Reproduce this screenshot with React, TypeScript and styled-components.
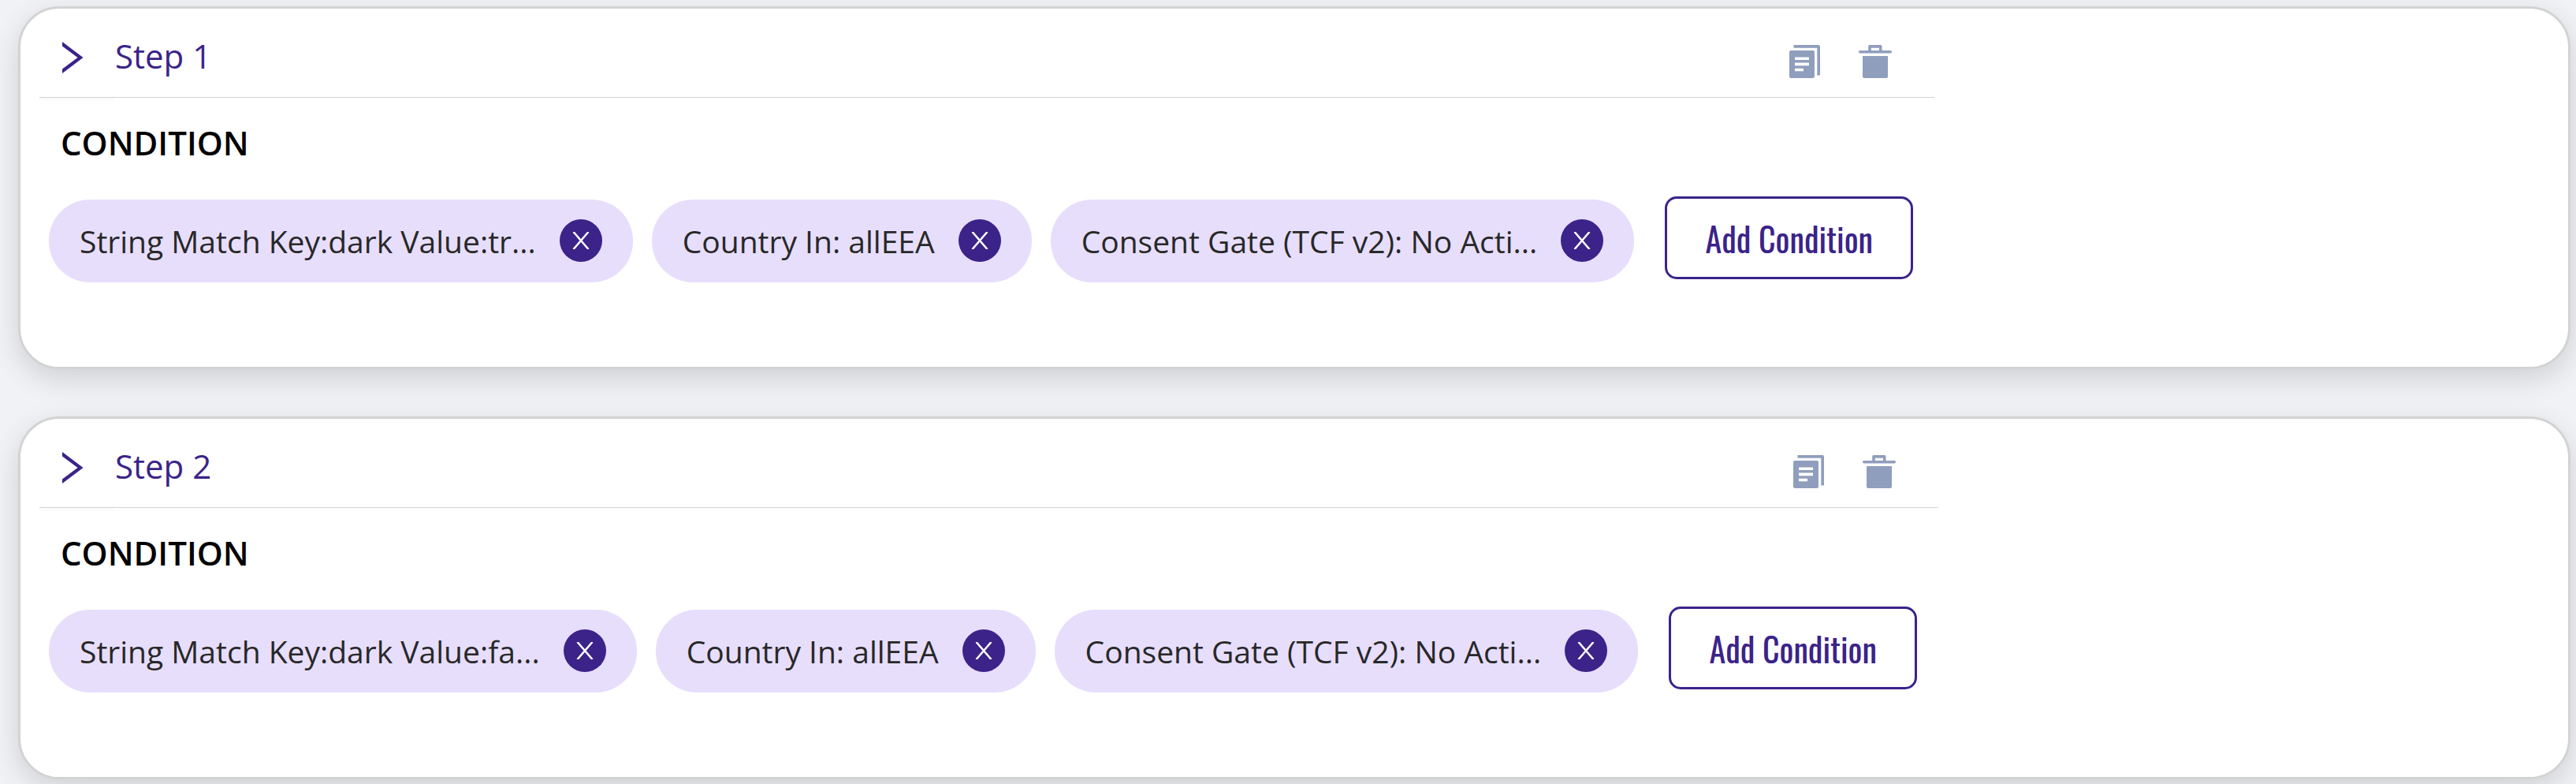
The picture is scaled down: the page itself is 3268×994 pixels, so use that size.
import React, { useState } from "react";
import styled, { createGlobalStyle } from "styled-components";

const GlobalStyle = createGlobalStyle`
  *, *::before, *::after { box-sizing: border-box; }
  body {
    margin: 0;
    background: #f1f2f6;
    font-family: "Open Sans", "Noto Sans", sans-serif;
  }
  button {
    margin: 0;
    padding: 0;
    border: 0;
    background: none;
    font: inherit;
    color: inherit;
    cursor: pointer;
  }
`;

const StepList = styled.main`
  display: flex;
  flex-direction: column;
  gap: 60px;
  padding: 8px 7px 6px 23px;
  overflow: hidden;
`;

const Card = styled.section`
  min-height: 460px;
  padding: 15px 24px;
  border: 3px solid #d3d3d3;
  border-radius: 52px;
  background: #ffffff;
  box-shadow: 0 12px 36px rgba(0, 0, 0, 0.14);
`;

const CardContent = styled.div`
  width: fit-content;
  isolation: isolate;
`;

const CardHeader = styled.header`
  display: flex;
  align-items: center;
  height: 98px;
  padding-right: 54px;
  border-bottom: 1px solid #d3d3d3;
`;

const Toggle = styled.button`
  position: relative;
  display: flex;
  align-items: center;
  width: 96px;
  height: 97px;
  padding: 0 0 3px 29px;

  /* faint lip under the toggle, kept behind the header rule */
  &::before {
    content: "";
    position: absolute;
    inset: 0;
    z-index: -1;
    border-radius: 6px;
    box-shadow: 0 5px 0 #fbfbfb;
  }
`;

const StepTitle = styled.h2`
  flex: 1;
  margin: 0 0 8px;
  color: #3b2389;
  font-size: 42px;
  line-height: 58px;
  font-weight: 400;
`;

const HeaderActions = styled.div`
  display: flex;
  gap: 48px;
  margin-top: 6px;
  color: #909ebd;

  button, svg { display: block; }
`;

const SectionTitle = styled.h3`
  margin: 28px 0 39px;
  padding-left: 27px;
  color: #000000;
  font-size: 42px;
  line-height: 58px;
  font-weight: 600;
`;

const ConditionRow = styled.div`
  display: flex;
  gap: 39px;
  padding: 0 27px 0 12px;
`;

const ChipList = styled.ul`
  display: flex;
  gap: 24px;
  margin: 4px 0 0;
  padding: 0;
  list-style: none;
`;

const Chip = styled.li`
  display: flex;
  align-items: center;
  gap: 30px;
  height: 105px;
  padding: 0 39px;
  border-radius: 52px;
  background: #e7defc;
  color: #282828;
  font-size: 39px;
  line-height: 54px;
  white-space: nowrap;
`;

const RemoveButton = styled.button`
  display: flex;
  align-items: center;
  justify-content: center;
  width: 54px;
  height: 54px;
  margin-bottom: 2px;
  border-radius: 50%;
  background: #3b2389;
  color: #ffffff;
`;

const AddButton = styled.button`
  min-width: 315px;
  height: 105px;
  border: 3px solid #3b2389;
  border-radius: 15px;
  color: #3b2389;
  font-family: "Oswald", "Liberation Sans Narrow", "Liberation Sans", sans-serif;
  font-size: 42px;
  line-height: 58px;
  font-weight: 400;
  white-space: nowrap;
`;

const ChevronIcon = () => (
  <svg width="27" height="42" viewBox="0 0 27 42" fill="currentColor" color="#3b2389" aria-hidden="true">
    <path d="M0 1 26.500 21 0 41V35.500L19.500 21 0 6.500Z" />
  </svg>
);

const CopyIcon = () => (
  <svg width="40" height="42" viewBox="0 0 40 42" fill="currentColor" aria-hidden="true">
    <path d="M5.500 0H37Q39 0 39 2V38.500H35.300V3.700H5.500Z" />
    <path
      fillRule="evenodd"
      d="M2 7H30Q32 7 32 9V40Q32 42 30 42H2Q0 42 0 40V9Q0 7 2 7ZM7 15.500V19H25V15.500ZM7 22.500V26.200H25V22.500ZM7 29.700V33.300H18V29.700Z"
    />
  </svg>
);

const TrashIcon = () => (
  <svg width="42" height="42" viewBox="0 0 42 42" fill="currentColor" aria-hidden="true">
    <path
      fillRule="evenodd"
      d="M14 0H28Q29.500 0 29.500 1.500V7H40.500Q42 7 42 8.700T40.500 10.500H1.500Q0 10.500 0 8.700T1.500 7H12.200V1.500Q12.200 0 14 0ZM15.800 3.700V7H26V3.700Z"
    />
    <path d="M5 14H37V40Q37 42 35 42H7Q5 42 5 40Z" />
  </svg>
);

const CrossIcon = () => (
  <svg width="22" height="22" viewBox="0 0 22 22" fill="none" stroke="currentColor" strokeWidth="2.500" aria-hidden="true">
    <path d="M1.500 0 20.500 22M20.500 0 1.500 22" />
  </svg>
);

interface Step {
  title: string;
  conditions: string[];
}

const initialSteps: Step[] = [
  {
    title: "Step 1",
    conditions: ["String Match Key:dark Value:tr...", "Country In: allEEA", "Consent Gate (TCF v2): No Acti..."],
  },
  {
    title: "Step 2",
    conditions: ["String Match Key:dark Value:fa...", "Country In: allEEA", "Consent Gate (TCF v2): No Acti..."],
  },
];

const StepCard = ({ step }: { step: Step }) => {
  const [conditions, setConditions] = useState(step.conditions);
  return (
    <Card>
      <CardContent>
        <CardHeader>
          <Toggle type="button" aria-label={`Expand ${step.title}`}>
            <ChevronIcon />
          </Toggle>
          <StepTitle>{step.title}</StepTitle>
          <HeaderActions>
            <button type="button" aria-label={`Duplicate ${step.title}`}>
              <CopyIcon />
            </button>
            <button type="button" aria-label={`Delete ${step.title}`}>
              <TrashIcon />
            </button>
          </HeaderActions>
        </CardHeader>
        <SectionTitle>CONDITION</SectionTitle>
        <ConditionRow>
          <ChipList>
            {conditions.map((condition) => (
              <Chip key={condition}>
                <span>{condition}</span>
                <RemoveButton
                  type="button"
                  aria-label={`Remove ${condition}`}
                  onClick={() => setConditions(conditions.filter((c) => c !== condition))}
                >
                  <CrossIcon />
                </RemoveButton>
              </Chip>
            ))}
          </ChipList>
          <AddButton type="button">Add Condition</AddButton>
        </ConditionRow>
      </CardContent>
    </Card>
  );
};

export default function App() {
  return (
    <>
      <GlobalStyle />
      <StepList>
        {initialSteps.map((step) => (
          <StepCard key={step.title} step={step} />
        ))}
      </StepList>
    </>
  );
}
